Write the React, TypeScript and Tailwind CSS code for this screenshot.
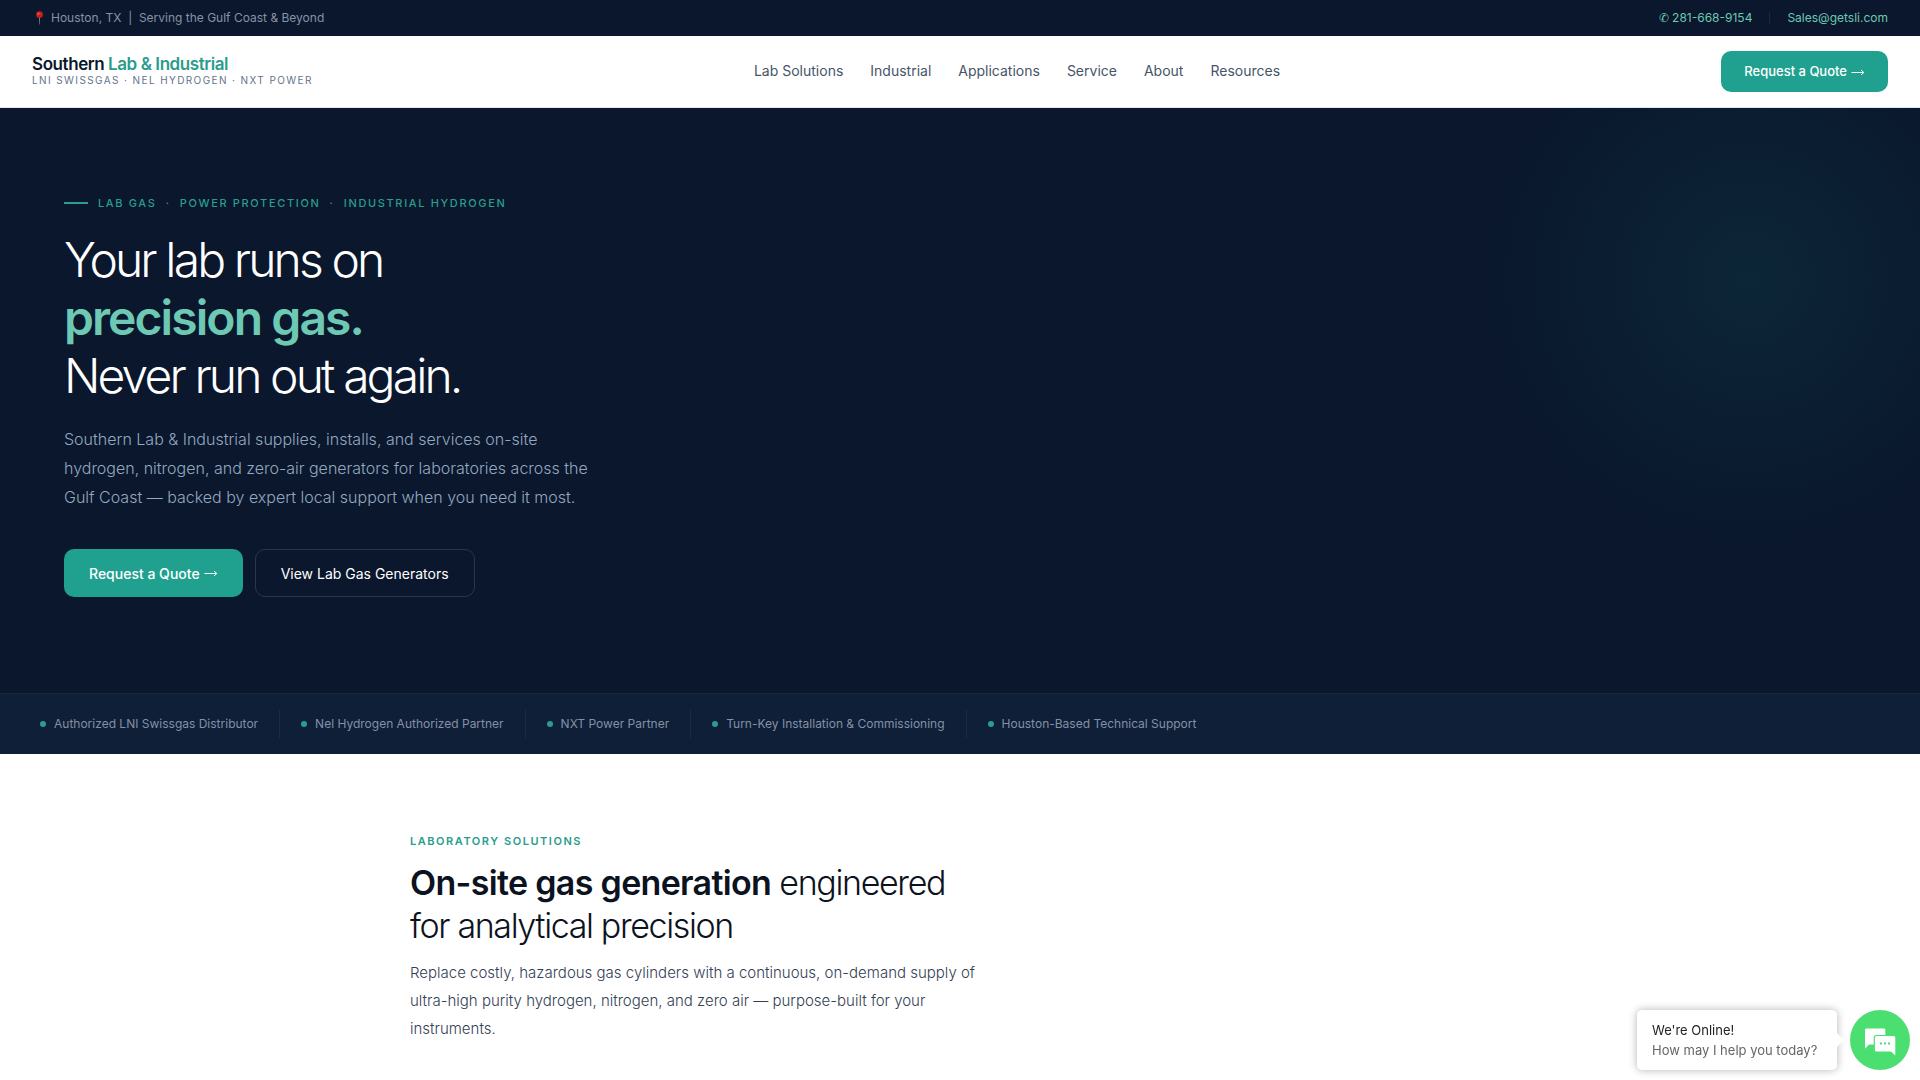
const navLinks = ['Lab Solutions', 'Industrial', 'Applications', 'Service', 'About', 'Resources'];

const trustItems = [
  'Authorized LNI Swissgas Distributor',
  'Nel Hydrogen Authorized Partner',
  'NXT Power Partner',
  'Turn-Key Installation & Commissioning',
  'Houston-Based Technical Support',
];

function Arrow() {
  return (
    <svg aria-hidden="true" viewBox="0 0 14 10" className="h-[10px] w-[14px] shrink-0" fill="none" stroke="currentColor" strokeWidth="1">
      <path d="M0.5 5.5H12.5M10 3L12.8 5.5L10 8" />
    </svg>
  );
}

function PinIcon() {
  return (
    <svg aria-hidden="true" viewBox="0 0 16 16" className="h-[14px] w-[15px]">
      <path d="M7.4 7h1.2l-.3 8.4h-.6z" fill="#7d8791" />
      <circle cx="8" cy="4.2" r="3.8" fill="#c8201c" />
      <circle cx="6.9" cy="3" r="1.1" fill="#ee6a60" />
    </svg>
  );
}

function TopBar() {
  return (
    <div className="flex h-9 items-center justify-between bg-[#0a172c] px-8 text-[12px]">
      <p className="flex items-center gap-1 text-[#8593a8]">
        <PinIcon />
        <span className="whitespace-pre">Houston, TX  |  Serving the Gulf Coast &amp; Beyond</span>
      </p>
      <div className="flex items-center gap-[17px] text-[#6dc9b3]">
        <a href="tel:2816689154">✆ 281-668-9154</a>
        <span className="h-3 w-px bg-[#1a2a42]" />
        <a href="mailto:Sales@getsli.com">Sales@getsli.com</a>
      </div>
    </div>
  );
}

function Header() {
  return (
    <header className="flex h-[72px] items-center justify-between border-b border-[#e2e8f0] bg-white px-8">
      <a href="#" className="flex flex-col pb-1">
        <span className="text-[17px] leading-5 font-semibold tracking-tight text-[#0a172c]">
          Southern <span className="text-[#2a9d8c]">Lab &amp; Industrial</span>
        </span>
        <span className="text-[10px] leading-3 tracking-[0.14em] text-[#64748b]">LNI SWISSGAS · NEL HYDROGEN · NXT POWER</span>
      </a>
      <nav className="flex gap-[27px] pb-[2px] text-[14px] text-[#475569]">
        {navLinks.map((label) => (
          <a key={label} href="#">
            {label}
          </a>
        ))}
      </nav>
      <button className="flex h-[41px] items-center gap-1 rounded-[10px] bg-[#20a18f] px-[23px] text-[13px] font-medium text-white">
        Request a Quote <Arrow />
      </button>
    </header>
  );
}

function Hero() {
  return (
    <section className="bg-[#0a172c] bg-[radial-gradient(circle_270px_at_calc(100%_-_170px)_172px,rgba(32,161,143,0.11),transparent)] px-16 pt-[85px] pb-24">
      <p className="flex items-center gap-[10px] text-[11px] leading-5 font-medium tracking-[0.15em] whitespace-pre text-[#2a9d8c]">
        <span className="h-[2px] w-6 bg-[#2a9d8c]" />
        LAB GAS  ·  POWER PROTECTION  ·  INDUSTRIAL HYDROGEN
      </p>
      <h1 className="mt-[18px] text-[48px] leading-[58px] font-light tracking-[-0.06em] text-white">
        Your lab runs on
        <br />
        <strong className="font-semibold tracking-[-0.04em] text-[#6dc9b3]">precision gas.</strong>
        <br />
        Never run out again.
      </h1>
      <p className="mt-5 max-w-[540px] text-[16px] leading-[29px] font-light text-[#94a8c0]">
        Southern Lab &amp; Industrial supplies, installs, and services on-site hydrogen, nitrogen, and zero-air generators for laboratories across the Gulf Coast — backed by expert local support when you need it most.
      </p>
      <div className="mt-[37px] flex gap-3 text-[14px] text-white">
        <button className="flex h-12 items-center gap-1 rounded-[10px] bg-[#20a18f] px-[25px] font-medium">
          Request a Quote <Arrow />
        </button>
        <button className="h-12 rounded-[10px] border border-[#2b364a] px-[25px]">View Lab Gas Generators</button>
      </div>
    </section>
  );
}

function TrustBar() {
  return (
    <ul className="flex items-center border-t border-[#172a44] bg-[#0f1f38] px-[19px] py-4 text-[12px] text-[#8390a6]">
      {trustItems.map((label) => (
        <li key={label} className="flex h-7 items-center gap-2 border-r border-[#1a2b46] px-[21px] last:border-r-0">
          <span className="h-[6px] w-[6px] rounded-full bg-[#2a9d8c]" />
          {label}
        </li>
      ))}
    </ul>
  );
}

function LabSolutions() {
  return (
    <section className="mx-auto max-w-[1100px] pt-[79px] pb-20">
      <p className="text-[11px] leading-4 font-semibold tracking-[0.14em] text-[#2a9d8c]">LABORATORY SOLUTIONS</p>
      <h2 className="mt-3 text-[34px] leading-[43px] font-light tracking-[-0.04em] text-[#0b1220]">
        <strong className="font-semibold tracking-[-0.02em]">On-site gas generation</strong> engineered
        <br />
        for analytical precision
      </h2>
      <p className="mt-3 max-w-[580px] text-[15px] leading-[28px] font-light text-[#334155]">
        Replace costly, hazardous gas cylinders with a continuous, on-demand supply of ultra-high purity hydrogen, nitrogen, and zero air — purpose-built for your instruments.
      </p>
    </section>
  );
}

function ChatWidget() {
  return (
    <aside className="fixed right-[10px] bottom-[10px] flex items-center gap-[13px]">
      <div className="relative flex h-[60px] w-[200px] flex-col justify-center rounded-[5px] bg-white pl-[15px] shadow-[0_0_8px_rgba(0,0,0,0.3)]">
        <p className="text-[13px] leading-5 text-[#222222]">We're Online!</p>
        <p className="text-[13px] leading-5 text-[#666666]">How may I help you today?</p>
        <span className="absolute top-[25px] -right-[5px] h-[10px] w-[10px] rotate-45 bg-white" />
      </div>
      <button aria-label="Open chat" className="flex h-[60px] w-[60px] items-center justify-center rounded-full bg-[#4adf70] pt-1">
        <svg aria-hidden="true" viewBox="0 0 32 28" className="h-7 w-8">
          <path d="M2.3 0.5H20a1.3 1.3 0 0 1 1.300 1.300V7H12.500A2.800 2.800 0 0 0 9.700 9.800V16.500H5L1 20.800V1.800A1.300 1.300 0 0 1 2.300 0.500Z" fill="#ffffff" />
          <path d="M12.500 8H29.700A1.600 1.600 0 0 1 31.300 9.600V27.500L27 23.500H12.500A1.600 1.600 0 0 1 10.900 21.900V9.600A1.600 1.600 0 0 1 12.500 8Z" fill="#ffffff" />
          <g fill="#4adf70">
            <rect x="16" y="14.500" width="2" height="2" />
            <rect x="20" y="14.500" width="2" height="2" />
            <rect x="24" y="14.500" width="2" height="2" />
          </g>
        </svg>
      </button>
    </aside>
  );
}

export default function App() {
  return (
    <div className="h-screen overflow-hidden bg-white font-['Inter',sans-serif]">
      <TopBar />
      <Header />
      <main>
        <Hero />
        <TrustBar />
        <LabSolutions />
      </main>
      <ChatWidget />
    </div>
  );
}
